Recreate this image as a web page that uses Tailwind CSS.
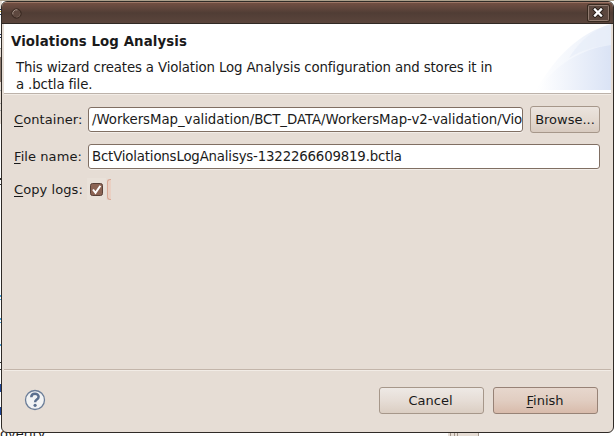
<!DOCTYPE html>
<html lang="en">
<head>
<meta charset="utf-8">
<title>Violations Log Analysis</title>
<script src="https://cdn.jsdelivr.net/npm/@tailwindcss/browser@4"></script>
</head>
<body class="relative h-[436px] w-[614px] overflow-hidden bg-white font-['DejaVu_Sans',sans-serif] text-[13px] leading-[17px] text-[#1a1a1a]">
  <!-- application behind the dialog -->
  <svg class="absolute inset-0" width="614" height="436" shape-rendering="crispEdges">
    <path fill="#ac9f8b" d="M0 0H614V1H0z"/>
    <path fill="#e6ddd5" d="M0 1H2V9H0zM0 49H2V124H0z"/>
    <path fill="#8d7b70" d="M0 57H2V82H0z"/>
    <path fill="#aaa" d="M0 48H2V49H0zM0 90H2V91H0zM0 103H2V104H0zM0 110H2V111H0z"/>
    <path fill="#27365f" d="M0 9H2V10H0zM0 14H2V15H0zM0 34H2V35H0zM0 37H2V38H0z"/>
    <path fill="#d7b642" d="M0 11H2V12H0z"/>
    <path fill="#333" d="M0 178H1V180H0zM0 184H1V185H0zM0 362H1V363H0zM0 369H1V370H0z"/>
    <path fill="#4ba3d9" d="M0 295H1V297H0zM0 299H1V300H0zM0 318H1V320H0zM0 322H1V323H0zM0 344H1V346H0z"/>
    <path fill="#1e4595" d="M0 384H1V392H0zM0 407H1V415H0z"/>
    <path fill="#e6ddd5" d="M448 433H479V436H448z"/>
    <path fill="#a2968b" d="M450 433H451V436H450zM454 433H455V436H454zM457 433H458V436H457zM478 433H479V436H478z"/>
  </svg>
  <div class="absolute top-[425px] left-0 whitespace-nowrap">overity</div>

  <main class="absolute top-px left-px flex h-[432px] w-[613px] flex-col overflow-hidden rounded-[6px] border border-[#302b27] bg-[#e6ddd5]">
    <header class="flex h-[22px] shrink-0 items-center justify-between border-t border-b border-t-[#9b7565] border-b-[#302925] bg-linear-to-b from-[#724f43] from-0% via-[#503d35] via-50% to-[#5b453c] pr-[3px] pl-[9px]">
      <svg width="11" height="11" viewBox="0 0 11 11" fill="none"><circle cx="5.5" cy="5.5" r="4.6" fill="#5e483f" stroke="#33241d"/><path d="M1.9 6.5A3.7 3.7 0 0 1 6.5 1.9" stroke="#a8958b"/><path d="M9.2 5.5A3.7 3.7 0 0 1 5.5 9.2" stroke="#705b51"/></svg>
      <svg width="23" height="18" viewBox="0 0 23 18" fill="none"><rect x=".5" y=".5" width="22" height="17" rx="1.5" fill="#5b473e" stroke="#37291f"/><rect x="1.5" y="1.5" width="20" height="15" rx="1" stroke="#917b70"/><path d="M8 5.5L14 11.5M14 5.5L8 11.5" stroke="#251d19" stroke-width="4" stroke-linecap="square"/><path d="M8 5.5L14 11.5M14 5.5L8 11.5" stroke="#fff" stroke-width="2.3" stroke-linecap="square"/></svg>
    </header>

    <div class="ml-[2px] mr-[2px] flex h-[69px] shrink-0 justify-between bg-white">
      <div class="pt-[9px] pl-[7px] whitespace-nowrap">
        <h1 class="text-[13.33px] font-bold tracking-[0.09px]">Violations Log Analysis</h1>
        <p class="pt-[9px] pl-[5px] text-[13.33px] tracking-[-0.14px]">This wizard creates a Violation Log Analysis configuration and stores it in<br>a .bctla file.</p>
      </div>
      <svg class="-ml-4 shrink-0" width="75" height="66" viewBox="0 0 75 66">
        <defs>
          <linearGradient id="a"><stop offset="0" stop-color="#fff"/><stop offset="1" stop-color="#e8eef9"/></linearGradient>
          <linearGradient id="b"><stop offset="0" stop-color="#fff"/><stop offset="1" stop-color="#dae3f5"/></linearGradient>
        </defs>
        <path fill="url(#a)" d="M0 66C18 35 42 9 75 0V66z"/>
        <path fill="#e6ecf9" fill-opacity=".6" d="M33 34C43 18 56 6 75 0V21C60 22 45 26 33 34z"/>
        <path fill="url(#b)" d="M2 66C18 42 44 25 75 21V66z"/>
      </svg>
    </div>
    <div class="ml-[2px] mr-[2px] h-[2px] shrink-0 border-t border-b border-t-[#bcb2aa] border-b-[#f2ece6]"></div>

    <section class="flex h-[274px] shrink-0 flex-col pt-[10px] pr-[12px] pl-[12px]">
      <div class="flex h-[28px] items-center">
        <label class="w-[74px] shrink-0 whitespace-nowrap tracking-[0.08px]"><span class="underline underline-offset-2">C</span>ontainer:</label>
        <div class="flex h-[25px] w-[435px] items-center rounded-[3px] border border-[#806f63] bg-white pl-[3px] text-[13.33px] tracking-[-0.05px] whitespace-nowrap shadow-[0_1px_0_#f3eee9]">/WorkersMap_validation/BCT_DATA/WorkersMap-v2-validation/Vio</div>
        <button class="ml-[7px] h-[27px] w-[70px] shrink-0 rounded-[3px] border border-[#a6978a] bg-linear-to-b from-[#ebe4de] via-[#e4dad1] via-50% to-[#d8cbc0] whitespace-nowrap">Browse...</button>
      </div>
      <div class="mt-[9px] flex h-[28px] items-center">
        <label class="w-[74px] shrink-0 whitespace-nowrap tracking-[0.08px]"><span class="underline underline-offset-2">F</span>ile name:</label>
        <div class="flex h-[25px] w-[512px] items-center rounded-[3px] border border-[#806f63] bg-white px-[3px] text-[13.33px] tracking-[-0.18px] whitespace-nowrap shadow-[0_1px_0_#f3eee9]">BctViolationsLogAnalisys-1322266609819.bctla</div>
      </div>
      <div class="mt-[8px] flex h-[22px] items-center">
        <label class="w-[73px] shrink-0 whitespace-nowrap tracking-[0.08px]"><span class="underline underline-offset-2">C</span>opy logs:</label>
        <div class="flex h-[22px] w-[19px] items-center bg-[#e9e1d9] pl-[3px]"><svg width="13" height="13" viewBox="0 0 13 13"><rect x=".5" y=".5" width="12" height="12" rx="2" fill="#8c6454" stroke="#594138"/><path d="M3 6.5L5.5 9.8L10.4 2.8" fill="none" stroke="#fff" stroke-width="2"/></svg></div>
        <div class="ml-px h-[21px] w-[4px] rounded-l-[3px] border border-r-0 border-[#d9a996] bg-[#ead0c3]"></div>
      </div>
    </section>

    <div class="ml-[2px] mr-[2px] h-[2px] shrink-0 border-t border-b border-t-[#c3b5aa] border-b-[#f2ece6]"></div>
    <footer class="flex h-[59px] items-center pr-[15px] pl-[22px]">
      <svg class="mb-[2px]" width="22" height="22" viewBox="0 0 22 22" fill="none"><circle cx="11" cy="11" r="9.5" fill="#f2f3f4" stroke="#6b7d98" stroke-width="1.3"/><path d="M7.3 8.2C7.3 3.7 14.6 3.7 14.6 7.8C14.6 10.7 11.1 10.5 11.1 13.2" stroke="#5b6f8e" stroke-width="2.5"/><circle cx="11.1" cy="16.3" r="1.6" fill="#5b6f8e"/></svg>
      <button class="ml-auto h-[27px] w-[105px] rounded-[3px] border border-[#a6978a] bg-linear-to-b from-[#eee9e5] via-[#e6ddd6] via-50% to-[#dbcec3] pr-[2px]">Cancel</button>
      <button class="ml-[9px] h-[27px] w-[105px] rounded-[3px] border border-[#978276] bg-linear-to-b from-[#e7d7cd] via-[#e1cdc1] via-50% to-[#d8bbab] pr-[1px]"><span class="underline underline-offset-2">F</span>inish</button>
    </footer>
  </main>
</body>
</html>
